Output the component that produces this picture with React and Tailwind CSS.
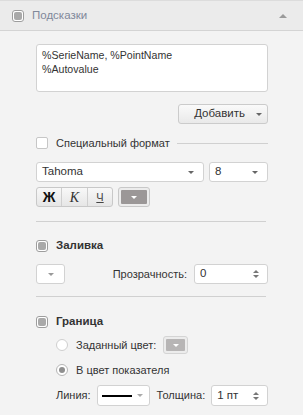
const Arrow = ({ className = "border-t-[#666]" }) => (
  <span className={`inline-block w-0 h-0 border-l-[3px] border-r-[3px] border-t-[3px] border-l-transparent border-r-transparent ${className}`} />
);

const Spinner = () => (
  <span className="flex flex-col items-center gap-[2px]">
    <span className="w-0 h-0 border-l-[3px] border-r-[3px] border-b-[3px] border-l-transparent border-r-transparent border-b-[#777]" />
    <span className="w-0 h-0 border-l-[3px] border-r-[3px] border-t-[3px] border-l-transparent border-r-transparent border-t-[#777]" />
  </span>
);

const GrayCheck = () => (
  <span className="w-[12px] h-[12px] rounded-[3px] border border-[#9d9d9d] bg-white p-[1px] flex">
    <span className="flex-1 rounded-[2px] bg-[#a9a9a9]" />
  </span>
);

function App() {
  return (
    <div
      className="w-[303px] h-[415px] bg-[#f3f3f3] text-[11px] text-[#333] overflow-hidden"
      style={{ fontFamily: '"Liberation Sans", Arial, sans-serif' }}
    >
      <div className="h-[31px] bg-[#ebebeb] border-t border-[#dcdcdc] border-b border-b-[#d4d4d4] flex items-center pl-[12px] pr-[16px]">
        <GrayCheck />
        <span className="ml-[8px] text-[11.5px] text-[#80889a]">Подсказки</span>
        <span className="ml-auto w-0 h-0 border-l-[4px] border-r-[4px] border-b-[4px] border-l-transparent border-r-transparent border-b-[#9a9a9a]" />
      </div>

      <div className="h-[382px] border-b border-[#dedede] pl-[36px] pr-[35px]">
        <div className="mt-[13px] h-[48px] bg-white border border-[#d2d2d2] rounded-[3px] px-[5px] pt-[3px] leading-[14px] text-[10.6px]">
          <div>%SerieName, %PointName</div>
          <div>%Autovalue</div>
        </div>

        <div className="mt-[12px] flex justify-end">
          <button
            type="button"
            className="w-[90px] h-[20px] rounded-[3px] border border-[#cbcbcb] bg-gradient-to-b from-[#fafafa] to-[#e9e9e9] flex items-center justify-end pr-[5px] text-[11.5px]"
          >
            <span className="mr-[11px]">Добавить</span>
            <Arrow />
          </button>
        </div>

        <div className="mt-[13px] h-[12px] flex items-center">
          <span className="w-[12px] h-[12px] rounded-[2px] border border-[#c6c6c6] bg-white" />
          <span className="ml-[8px] text-[11px]">Специальный формат</span>
          <span className="ml-[7px] flex-1 h-px bg-[#d0d0d0]" />
        </div>

        <div className="mt-[13px] flex gap-[5px] h-[20px]">
          <div className="w-[168px] bg-white border border-[#d2d2d2] rounded-[3px] flex items-center pl-[5px] pr-[9px] text-[11.5px]">
            <span>Tahoma</span>
            <span className="ml-auto flex"><Arrow /></span>
          </div>
          <div className="flex-1 bg-white border border-[#d2d2d2] rounded-[3px] flex items-center pl-[5px] pr-[9px] text-[11.5px]">
            <span>8</span>
            <span className="ml-auto flex"><Arrow /></span>
          </div>
        </div>

        <div className="mt-[5px] flex h-[20px]">
          <div className="w-[77px] flex border border-[#c8c8c8] rounded-[3px] bg-gradient-to-b from-[#f8f8f8] to-[#e6e6e6] overflow-hidden">
            <span className="w-[25px] flex items-center justify-center font-black text-[14px] text-[#111] border-r border-[#cfcfcf]">Ж</span>
            <span
              className="w-[26px] flex items-center justify-center italic text-[14px] text-[#333] border-r border-[#cfcfcf]"
              style={{ fontFamily: '"Liberation Serif", serif' }}
            >
              К
            </span>
            <span className="flex-1 flex items-center justify-center underline text-[11px] text-[#444]">Ч</span>
          </div>
          <div className="ml-[5px] w-[32px] border border-[#c8c8c8] rounded-[3px] bg-[#ececec] p-[2px] flex">
            <span className="flex-1 bg-[#9b9797] rounded-[1px] flex items-center justify-center">
              <Arrow className="border-t-white" />
            </span>
          </div>
        </div>

        <div className="mt-[14px] h-px bg-[#d0d0d0] mr-[2px]" />

        <div className="mt-[18px] h-[12px] flex items-center">
          <GrayCheck />
          <span className="ml-[8px] text-[11.5px] font-bold text-[#333]">Заливка</span>
        </div>

        <div className="mt-[12px] h-[20px] flex items-center">
          <div className="w-[29px] h-full bg-white border border-[#d2d2d2] rounded-[3px] flex items-center justify-center">
            <Arrow className="border-t-[#999]" />
          </div>
          <span className="ml-auto mr-[7px] text-[11px]">Прозрачность:</span>
          <div className="w-[74px] h-full bg-white border border-[#d2d2d2] rounded-[3px] flex items-center pl-[5px] pr-[8px] text-[11.5px]">
            <span>0</span>
            <span className="ml-auto"><Spinner /></span>
          </div>
        </div>

        <div className="mt-[12px] h-px bg-[#d0d0d0] mr-[2px]" />

        <div className="mt-[19px] h-[12px] flex items-center">
          <GrayCheck />
          <span className="ml-[8px] text-[11.5px] font-bold text-[#333]">Граница</span>
        </div>

        <div className="mt-[8px] h-[18px] pl-[20px] flex items-center">
          <span className="w-[12px] h-[12px] rounded-full border border-[#cfcfcf] bg-white" />
          <span className="ml-[8px] text-[11px]">Заданный цвет:</span>
          <div className="ml-[7px] w-[25px] h-[18px] border border-[#d4d4d4] rounded-[3px] bg-[#ececec] p-[2px] flex">
            <span className="flex-1 bg-[#b7b5b5] rounded-[1px] flex items-center justify-center">
              <Arrow className="border-t-white" />
            </span>
          </div>
        </div>

        <div className="mt-[7px] h-[18px] pl-[20px] flex items-center">
          <span className="w-[12px] h-[12px] rounded-full border border-[#b5b5b5] bg-white flex items-center justify-center">
            <span className="w-[6px] h-[6px] rounded-full bg-[#8f8f8f]" />
          </span>
          <span className="ml-[8px] text-[11px]">В цвет показателя</span>
        </div>

        <div className="mt-[6px] h-[21px] pl-[20px] flex items-center">
          <span className="text-[11px]">Линия:</span>
          <div className="ml-[6px] w-[53px] h-full bg-white border border-[#d2d2d2] rounded-[3px] flex items-center pl-[4px] pr-[6px]">
            <span className="w-[30px] h-[2px] bg-black" />
            <span className="ml-auto flex"><Arrow className="border-t-[#aaa]" /></span>
          </div>
          <span className="ml-[7px] text-[11px]">Толщина:</span>
          <div className="ml-[6px] flex-1 h-full bg-white border border-[#d2d2d2] rounded-[3px] flex items-center pl-[5px] pr-[8px] text-[11.5px]">
            <span>1 пт</span>
            <span className="ml-auto"><Spinner /></span>
          </div>
        </div>
      </div>
    </div>
  );
}

export default App;
